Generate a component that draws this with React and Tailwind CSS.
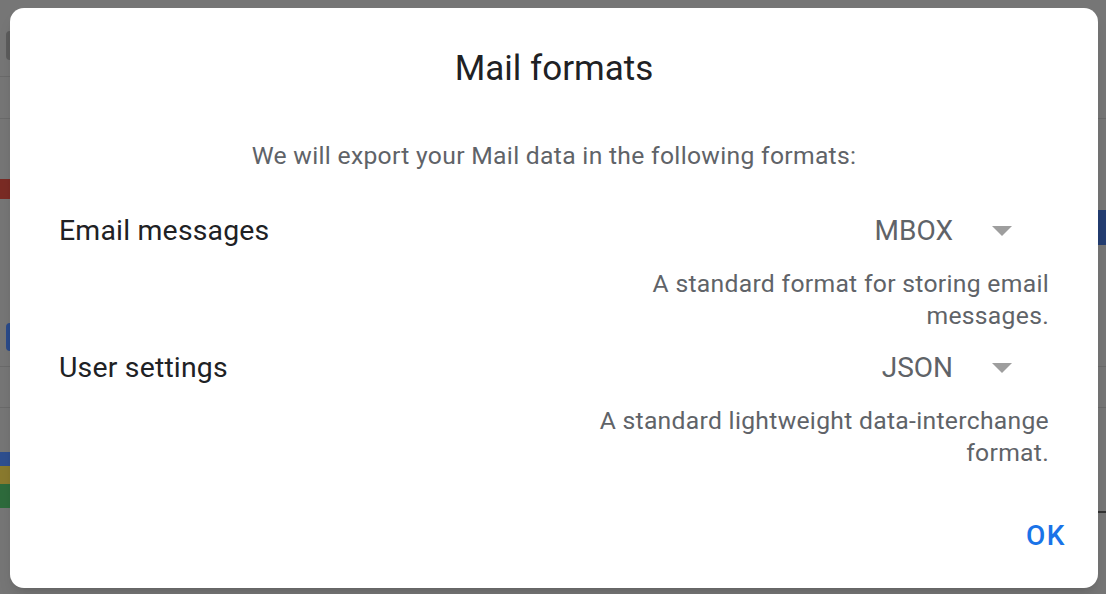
import React from 'react';

function Caret() {
    return (
        <svg width="20" height="10" viewBox="0 0 20 10" className="shrink-0">
            <polygon points="0,0 20,0 10,10" fill="#9e9e9e" />
        </svg>
    );
}

function FormatRow({ label, value, desc }) {
    return (
        <div className="flex flex-col">
            <div className="flex items-center justify-between h-12">
                <span className="text-[28.4px] text-[#202124] tracking-[0.2px]">{label}</span>
                <div className="flex items-center mr-[37px]">
                    <span className="text-[28px] text-[#5f6368]">{value}</span>
                    <span className="ml-[39px]"><Caret /></span>
                </div>
            </div>
            <p className="mt-[13px] text-right text-[24.7px] leading-[32px] text-[#5f6368] tracking-[0.3px]">
                {desc[0]}<br />{desc[1]}
            </p>
        </div>
    );
}

export default function App() {
    return (
        <div className="relative w-[1106px] h-[594px] overflow-hidden bg-[#767676]" style={{ fontFamily: 'Roboto, "Open Sans", sans-serif' }}>

            {/* Dimmed page behind the dialog */}
            <div className="flex flex-col">
                <div className="h-[77px] flex">
                    <div className="w-[10px] border-b border-[#6a6a6a] pt-[31px] pl-[6px]">
                        <div className="h-[29px] w-[6px] rounded-l bg-[#5c5c5c]" />
                    </div>
                </div>
                <div className="h-[42px] border-b border-[#6a6a6a] flex justify-between">
                    <div />
                </div>
                <div className="h-[247px] flex justify-between">
                    <div className="pt-[60px]">
                        <div className="w-[10px] h-[20px] bg-[#7a2b24]" />
                    </div>
                    <div className="pt-[91px]">
                        <div className="w-[8px] h-[35px] bg-[#243e72]" />
                    </div>
                </div>
                <div className="h-[42px] border-t border-b border-[#6a6a6a] flex">
                    <div className="ml-[6px] mt-[-44px] w-[6px] h-[28px] rounded-l bg-[#2a4a8a]" />
                </div>
                <div className="h-[104px] flex justify-between">
                    <div className="pt-[44px] flex flex-col">
                        <div className="w-[10px] h-[14px] bg-[#2f4f8f]" />
                        <div className="w-[10px] h-[18px] bg-[#8a7a2e]" />
                        <div className="w-[10px] h-[24px] bg-[#2e6b3c]" />
                    </div>
                    <div className="pt-[103px] flex flex-col">
                        <div className="w-[8px] h-[3px] bg-[#333]" />
                        <div className="w-[8px] h-[18px]" />
                        <div className="w-[8px] h-[3px] bg-[#333]" />
                    </div>
                </div>
            </div>

            {/* Dialog */}
            <div className="absolute left-[10px] top-[8px] w-[1088px] h-[580px] bg-white rounded-[14px] shadow-lg px-[49px] pt-[41px] flex flex-col">
                <h1 className="text-center text-[35px] leading-[40px] text-[#202124]">Mail formats</h1>
                <p className="mt-[51px] text-center text-[24.7px] leading-[32px] text-[#5f6368] tracking-[0.3px]">
                    We will export your Mail data in the following formats:
                </p>

                <div className="mt-[35px] flex flex-col gap-[12px]">
                    <FormatRow
                        label="Email messages"
                        value="MBOX"
                        desc={['A standard format for storing email', 'messages.']}
                    />
                    <FormatRow
                        label="User settings"
                        value="JSON"
                        desc={['A standard lightweight data-interchange', 'format.']}
                    />
                </div>

                <div className="mt-[46px] flex justify-end mr-[-17px]">
                    <button className="h-9 text-[28px] font-medium text-[#1a73e8] tracking-[1.5px]">OK</button>
                </div>
            </div>
        </div>
    );
}
